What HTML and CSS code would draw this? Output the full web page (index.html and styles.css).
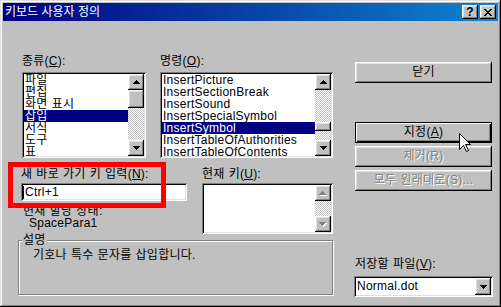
FILE: index.html
```html
<!DOCTYPE html>
<html lang="ko">
	<head>
		<meta charset="UTF-8">
		<meta name="viewport" content="width=device-width, initial-scale=1.0">
		<title>키보드 사용자 정의</title>
		<link rel="stylesheet" href="styles.css">
	</head>
	<body>
		<div class="dlg_window">
			<div class="title_bar">
				<span class="title_text">키보드 사용자 정의</span>
				<div class="title_btns">
					<span class="title_btn">?</span>
					<span class="title_btn">
						<svg width="8" height="7" viewBox="0 0 8 7"><path d="M0 0h2v1h-2zM6 0h2v1h-2zM1 1h2v1h-2zM5 1h2v1h-2zM2 2h4v1h-4zM3 3h2v1h-2zM2 4h4v1h-4zM1 5h2v1h-2zM5 5h2v1h-2zM0 6h2v1h-2zM6 6h2v1h-2z" fill="#000"/></svg>
					</span>
				</div>
			</div>

			<div class="dlg_body">
				<div class="main_col">
					<!-- 종류 / 명령 -->
					<div class="row_top">
						<div class="cat_field">
							<div class="field_label">종류(<u>C</u>):</div>
							<div class="list_box">
								<ul class="list_items">
									<li>파일</li>
									<li>편집</li>
									<li>화면 표시</li>
									<li class="selected">삽입</li>
									<li>서식</li>
									<li>도구</li>
									<li>표</li>
								</ul>
								<div class="scroll_bar">
									<span class="scroll_btn"><svg width="7" height="4"><path d="M3 0h1v1h1v1h1v1h1v1H0V3h1V2h1V1h1z"/></svg></span>
									<div class="scroll_track"><span class="scroll_thumb" style="height: 18px;"></span></div>
									<span class="scroll_btn"><svg width="7" height="4"><path d="M0 0h7v1H6v1H5v1H4v1H3V3H2V2H1V1H0z"/></svg></span>
								</div>
							</div>
						</div>
						<div class="cmd_field">
							<div class="field_label">명령(<u>O</u>):</div>
							<div class="list_box">
								<ul class="list_items">
									<li>InsertPicture</li>
									<li>InsertSectionBreak</li>
									<li>InsertSound</li>
									<li>InsertSpecialSymbol</li>
									<li class="selected">InsertSymbol</li>
									<li>InsertTableOfAuthorities</li>
									<li>InsertTableOfContents</li>
								</ul>
								<div class="scroll_bar">
									<span class="scroll_btn"><svg width="7" height="4"><path d="M3 0h1v1h1v1h1v1h1v1H0V3h1V2h1V1h1z"/></svg></span>
									<div class="scroll_track"><span class="scroll_thumb" style="margin-top: 32px; height: 9px;"></span></div>
									<span class="scroll_btn"><svg width="7" height="4"><path d="M0 0h7v1H6v1H5v1H4v1H3V3H2V2H1V1H0z"/></svg></span>
								</div>
							</div>
						</div>
					</div>

					<!-- 새 바로 가기 키 / 현재 키 -->
					<div class="row_mid">
						<div class="key_field">
							<div class="field_label">새 바로 가기 키 입력(<u>N</u>):</div>
							<div class="text_box"><span class="caret"></span>Ctrl+1</div>
							<div class="assign_info">
								<div>현재 할당 상태:</div>
								<div class="macro_name">SpacePara1</div>
							</div>
						</div>
						<div class="cur_field">
							<div class="field_label">현재 키(<u>U</u>):</div>
							<div class="list_box">
								<ul class="list_items"></ul>
								<div class="scroll_bar">
									<span class="scroll_btn"><svg width="8" height="5"><path d="M3 0h1v1h1v1h1v1h1v1H0V3h1V2h1V1h1z" fill="#fff" transform="translate(1 1)"/><path d="M3 0h1v1h1v1h1v1h1v1H0V3h1V2h1V1h1z" fill="#808080"/></svg></span>
									<div class="scroll_track"></div>
									<span class="scroll_btn"><svg width="8" height="5"><path d="M0 0h7v1H6v1H5v1H4v1H3V3H2V2H1V1H0z" fill="#fff" transform="translate(1 1)"/><path d="M0 0h7v1H6v1H5v1H4v1H3V3H2V2H1V1H0z" fill="#808080"/></svg></span>
								</div>
							</div>
						</div>
					</div>

					<!-- 설명 -->
					<div class="desc_group">
						<div class="desc_caption">설명</div>
						<p class="desc_text">기호나 특수 문자를 삽입합니다.</p>
					</div>
				</div>

				<div class="side_col">
					<div class="push_btn">닫기</div>
					<div class="push_btn default_btn">지정(<u>A</u>)</div>
					<div class="push_btn disabled">제거(R)</div>
					<div class="push_btn disabled">모두 원래대로(S)...</div>
					<div class="save_label">저장할 파일(<u>V</u>):</div>
					<div class="combo_box">
						<span class="combo_text">Normal.dot</span>
						<span class="scroll_btn combo_btn"><svg width="7" height="4"><path d="M0 0h7v1H6v1H5v1H4v1H3V3H2V2H1V1H0z"/></svg></span>
					</div>
				</div>
			</div>

			<div class="red_mark"></div>
			<svg class="mouse_cursor" width="12" height="19" viewBox="0 0 12 19">
				<path d="M0.5 0.5V16.5L4.5 12.5L7.5 18.5L9.5 17.5L6.5 11.5H11.5Z" fill="#fff" stroke="#000" stroke-width="1" stroke-linejoin="miter"/>
			</svg>
		</div>
	</body>
</html>
```

FILE: styles.css
```css
* {
	margin: 0;
	padding: 0;
	box-sizing: border-box;
}

body {
	font-family: "Liberation Sans", "Noto Sans CJK KR", sans-serif;
	font-size: 12px;
	color: #000;
	background-color: #c0c0c0;
	letter-spacing: 0.25px;
	word-spacing: 0.5px;
}

ul {
	list-style: none;
}

.dlg_window {
	position: relative;
	width: 501px;
	height: 307px;
	padding: 3px;
	background-color: #c0c0c0;
	box-shadow: inset -1px -1px #000, inset 1px 1px #dfdfdf, inset -2px -2px #808080, inset 2px 2px #fff;
}

/* 제목 표시줄 */
.title_bar {
	display: flex;
	justify-content: space-between;
	align-items: flex-start;
	height: 18px;
	padding: 0 2px;
	background: linear-gradient(to right, #000080, #1084d0);
	color: #fff;
}

.title_text {
	line-height: 18px;
	letter-spacing: 0;
	word-spacing: 0;
}

.title_btns {
	display: flex;
	gap: 2px;
	margin-top: 2px;
}

.title_btn {
	display: flex;
	justify-content: center;
	align-items: center;
	width: 16px;
	height: 14px;
	background-color: #c0c0c0;
	color: #000;
	font-size: 12px;
	font-weight: bold;
	box-shadow: inset -1px -1px #000, inset 1px 1px #fff, inset -2px -2px #808080, inset 2px 2px #dfdfdf;
}

.dlg_body {
	display: flex;
	height: 283px;
}

.main_col {
	width: 315px;
	margin-left: 15px;
	padding-top: 33px;
}

.field_label {
	height: 14px;
	line-height: 14px;
	margin-bottom: 4px;
	white-space: nowrap;
}

.row_top {
	display: flex;
	gap: 14px;
	margin-left: 4px;
}

.cat_field {
	width: 124px;
}

.cmd_field {
	width: 173px;
}

.list_box {
	display: flex;
	height: 86px;
	padding: 2px;
	background-color: #fff;
	box-shadow: inset 1px 1px #808080, inset -1px -1px #fff, inset 2px 2px #000, inset -2px -2px #dfdfdf;
}

.list_items {
	flex: 1;
	overflow: hidden;
}

.list_items li {
	height: 12px;
	line-height: 12px;
	padding-left: 1px;
	white-space: nowrap;
}

.list_items li.selected {
	background-color: #000080;
	color: #fff;
}

.scroll_bar {
	display: flex;
	flex-direction: column;
	width: 16px;
}

.scroll_btn {
	display: flex;
	justify-content: center;
	align-items: center;
	width: 16px;
	height: 16px;
	flex-shrink: 0;
	background-color: #c0c0c0;
	box-shadow: inset -1px -1px #000, inset 1px 1px #fff, inset -2px -2px #808080, inset 2px 2px #dfdfdf;
}

.scroll_track {
	flex: 1;
	background-color: #c0c0c0;
	background-image: conic-gradient(#fff 25%, transparent 0 50%, #fff 0 75%, transparent 0);
	background-size: 2px 2px;
}

.scroll_thumb {
	display: block;
	background-color: #c0c0c0;
	box-shadow: inset -1px -1px #000, inset 1px 1px #fff, inset -2px -2px #808080, inset 2px 2px #dfdfdf;
}

.row_mid {
	display: flex;
	gap: 15px;
	margin: 9px 0 0 3px;
}

.row_mid .field_label {
	margin-bottom: 2px;
}

.key_field {
	width: 166px;
}

.cur_field {
	width: 131px;
}

.cur_field .list_box {
	height: 51px;
}

.text_box {
	display: flex;
	align-items: center;
	height: 18px;
	padding: 2px;
	line-height: 14px;
	background-color: #fff;
	box-shadow: inset 1px 1px #808080, inset -1px -1px #fff, inset 2px 2px #000, inset -2px -2px #dfdfdf;
}

.caret {
	width: 1px;
	height: 13px;
	margin-right: 1px;
	background-color: #000;
}

.assign_info {
	margin: 4px 0 0 2px;
	line-height: 12px;
	white-space: nowrap;
}

.macro_name {
	padding-left: 6px;
}

/* 설명 그룹 */
.desc_group {
	margin-top: 6px;
	padding-bottom: 32px;
	border: 1px solid #808080;
	box-shadow: inset 1px 1px #fff, 1px 1px #fff;
}

.desc_caption {
	display: table;
	margin: -7px 0 0 3px;
	padding: 0 1px;
	line-height: 12px;
	background-color: #c0c0c0;
}

.desc_text {
	margin: 2px 0 0 14px;
	line-height: 14px;
}

/* 오른쪽 버튼 */
.side_col {
	display: flex;
	flex-direction: column;
	width: 139px;
	margin-left: 21px;
	padding-top: 41px;
}

.push_btn {
	width: 137px;
	height: 21px;
	margin: 3px 0 0 1px;
	line-height: 21px;
	text-align: center;
	background-color: #c0c0c0;
	box-shadow: inset -1px -1px #000, inset 1px 1px #fff, inset -2px -2px #808080, inset 2px 2px #dfdfdf;
}

.push_btn:first-child {
	margin-top: 0;
}

.default_btn {
	margin-top: 39px;
	line-height: 19px;
	border: 1px solid #000;
	box-shadow: inset 1px 1px #fff, inset -1px -1px #000, inset -2px -2px #808080;
}

.push_btn.disabled {
	color: #808080;
	text-shadow: 1px 1px #fff;
}

.save_label {
	margin: 66px 0 0 1px;
	line-height: 14px;
	white-space: nowrap;
}

.combo_box {
	display: flex;
	height: 21px;
	margin-top: 5px;
	padding: 2px;
	background-color: #fff;
	box-shadow: inset 1px 1px #808080, inset -1px -1px #fff, inset 2px 2px #000, inset -2px -2px #dfdfdf;
}

.combo_text {
	flex: 1;
	padding-left: 1px;
	line-height: 17px;
}

.combo_btn {
	height: 17px;
}

/* 강조 표시와 마우스 포인터 */
.red_mark {
	position: absolute;
	left: 8px;
	top: 162px;
	width: 158px;
	height: 46px;
	border: 5px solid #f00;
}

.mouse_cursor {
	position: absolute;
	left: 459px;
	top: 133px;
}
```
